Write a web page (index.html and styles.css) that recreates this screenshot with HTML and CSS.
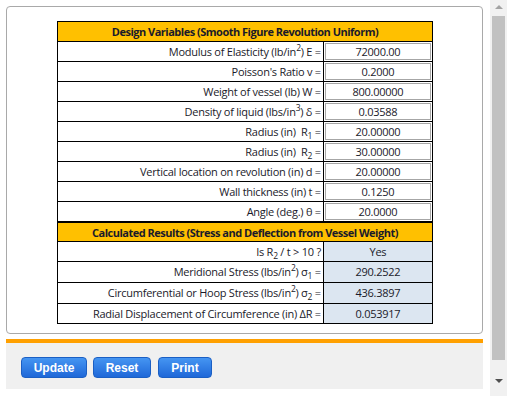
FILE: index.html
```html
<!DOCTYPE html>
<html lang="en">
<head>
    <meta charset="UTF-8">
    <title>Smooth Figure Revolution Uniform</title>
    <link rel="stylesheet" href="styles.css">
</head>
<body>
<div class="page">
    <div class="main">
        <div class="panel">
            <table class="calc">
                <tr><th colspan="2">Design Variables (Smooth Figure Revolution Uniform)</th></tr>
                <tr><td class="lbl">Modulus of Elasticity (lb/in<sup>2</sup>) E =</td><td class="val"><span class="box">72000.00</span></td></tr>
                <tr><td class="lbl">Poisson's Ratio v =</td><td class="val"><span class="box">0.2000</span></td></tr>
                <tr><td class="lbl">Weight of vessel (lb) W =</td><td class="val"><span class="box">800.00000</span></td></tr>
                <tr><td class="lbl">Density of liquid (lbs/in<sup>3</sup>) δ =</td><td class="val"><span class="box">0.03588</span></td></tr>
                <tr><td class="lbl">Radius (in)&nbsp; R<sub>1</sub> =</td><td class="val"><span class="box">20.00000</span></td></tr>
                <tr><td class="lbl">Radius (in)&nbsp; R<sub>2</sub> =</td><td class="val"><span class="box">30.00000</span></td></tr>
                <tr><td class="lbl">Vertical location on revolution (in) d =</td><td class="val"><span class="box">20.00000</span></td></tr>
                <tr><td class="lbl">Wall thickness (in) t =</td><td class="val"><span class="box">0.1250</span></td></tr>
                <tr><td class="lbl">Angle (deg.) θ =</td><td class="val"><span class="box">20.0000</span></td></tr>
                <tr class="split"><th colspan="2">Calculated Results (Stress and Deflection from Vessel Weight)</th></tr>
                <tr><td class="lbl">Is R<sub>2</sub> / t &gt; 10 ?</td><td class="out">Yes</td></tr>
                <tr class="tall"><td class="lbl">Meridional Stress (lbs/in<sup>2</sup>) σ<sub>1</sub> =</td><td class="out">290.2522</td></tr>
                <tr class="tall"><td class="lbl">Circumferential or Hoop Stress (lbs/in<sup>2</sup>) σ<sub>2</sub> =</td><td class="out">436.3897</td></tr>
                <tr><td class="lbl">Radial Displacement of Circumference (in) ΔR =</td><td class="out">0.053917</td></tr>
            </table>
        </div>
        <div class="toolbar">
            <button class="btn btn-update">Update</button>
            <button class="btn btn-reset">Reset</button>
            <button class="btn btn-print">Print</button>
        </div>
    </div>
    <div class="scrollbar">
        <span class="arrow up"></span>
        <span class="thumb"></span>
        <span class="arrow down"></span>
    </div>
</div>
</body>
</html>
```

FILE: styles.css
```css
body {
    margin: 0;
    background: #fff;
    font-family: "Open Sans", "Noto Sans", sans-serif;
    color: #1a1a2a;
}
.page {
    display: flex;
    height: 396px;
}
.main {
    width: 477px;
    padding: 6px 0 0 6px;
}
.panel {
    height: 326px;
    border: 1px solid #a9a9a9;
    border-radius: 4px;
    box-sizing: content-box;
    width: 475px;
}
.calc {
    margin: 14px 0 0 50px;
    width: 376px;
    border-collapse: collapse;
    font-size: 11px;
    letter-spacing: -0.25px;
}
.calc th {
    background: #ffc000;
    border: 1px solid #000;
    height: 19px;
    padding: 0;
    font-weight: bold;
    font-size: 11px;
    letter-spacing: -0.5px;
}
.calc td {
    border: 1px solid #000;
    height: 19px;
    padding: 0;
    line-height: 14px;
}
.calc .split th {
    border-top: 2px solid #000;
    height: 18px;
}
.lbl {
    text-align: right;
    padding-right: 2px !important;
    width: 266px;
}
.calc .val {
    width: 107px;
    height: 17px;
    padding: 1px;
}
.box {
    display: block;
    border: 1px solid #a6a6a6;
    height: 15px;
    line-height: 15px;
    text-align: center;
    background: #fff;
}
.out {
    background: #dce6f1;
    text-align: center;
}
.calc .tall td {
    height: 20px;
}
sup, sub {
    font-size: 8.5px;
    line-height: 0;
}
.toolbar {
    margin-top: 5px;
    border-top: 4px solid #ffa000;
    background: #f0f0f0;
    height: 32px;
    padding: 14px 0 0 15px;
    display: flex;
    gap: 6px;
}
.btn {
    height: 21px;
    border: 1px solid #1b5fc4;
    border-radius: 4px;
    background: linear-gradient(#4595f2, #1f68d8);
    color: #fff;
    font-family: "Liberation Sans", Arial, sans-serif;
    font-weight: bold;
    font-size: 12px;
    padding: 0;
    cursor: pointer;
}
.btn-update { width: 66px; }
.btn-reset { width: 58px; }
.btn-print { width: 54px; margin-left: 1px; }
.scrollbar {
    margin-left: 7px;
    width: 17px;
    background: #f1f1f1;
    position: relative;
}
.thumb {
    position: absolute;
    left: 2px;
    top: 16px;
    width: 13px;
    height: 344px;
    background: #c1c1c1;
}
.arrow {
    position: absolute;
    left: 5px;
    width: 0;
    height: 0;
    border-left: 4px solid transparent;
    border-right: 4px solid transparent;
}
.arrow.up {
    top: 5px;
    border-bottom: 4px solid #a3a3a3;
}
.arrow.down {
    top: 379px;
    border-top: 4px solid #505050;
}
```
